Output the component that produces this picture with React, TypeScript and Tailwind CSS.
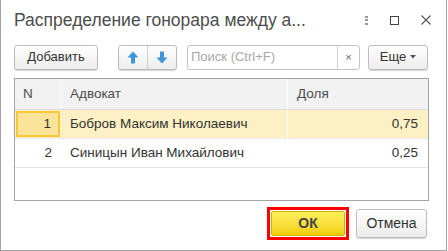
import React from "react";

const font = { fontFamily: '"Liberation Sans", Arial, sans-serif' };

function Btn({ children, className = "" }: { children: React.ReactNode; className?: string }) {
  return (
    <div
      className={
        "flex items-center justify-center rounded-[3px] border border-[#bdbdbd] bg-gradient-to-b from-white to-[#ececec] text-[13px] text-[#333] shadow-[0_1px_1px_rgba(0,0,0,0.18)] " +
        className
      }
    >
      {children}
    </div>
  );
}

function Arrow({ up }: { up?: boolean }) {
  return (
    <svg width="12" height="13" viewBox="0 0 12 13">
      <path
        d={up ? "M6 0.5 L11.5 6.5 L8 6.5 L8 12.5 L4 12.5 L4 6.5 L0.5 6.5 Z" : "M6 12.5 L11.5 6.5 L8 6.5 L8 0.5 L4 0.5 L4 6.5 L0.5 6.5 Z"}
        fill="#3d96dc"
      />
    </svg>
  );
}

export default function App() {
  return (
    <div className="w-[448px] h-[251px] bg-white" style={font}>
      <div className="w-[447px] h-[251px] border-l border-r border-b border-[#a3a3a3] flex flex-col">
        {/* Title */}
        <div className="h-[44px] flex items-start pt-[9px] pl-[13px] pr-[13px]">
          <div className="text-[17.5px] text-[#4d4d4d] leading-[22px] w-[320px] whitespace-nowrap">
            Распределение гонорара между а...
          </div>
          <div className="flex items-center h-[22px] ml-[31px]">
            <div className="flex flex-col gap-[1.5px] w-[3px]">
              <span className="block w-[2.5px] h-[2px] bg-[#9a9a9a]" />
              <span className="block w-[2.5px] h-[2px] bg-[#9a9a9a]" />
              <span className="block w-[2.5px] h-[2px] bg-[#9a9a9a]" />
            </div>
            <div className="ml-[22px] w-[9px] h-[9px] border border-[#444]" />
            <svg className="ml-[22px]" width="10" height="10" viewBox="0 0 10 10">
              <path d="M0.5 0.5 L9.5 9.5 M9.5 0.5 L0.5 9.5" stroke="#555" strokeWidth="1.1" />
            </svg>
          </div>
        </div>
        {/* Toolbar */}
        <div className="h-[26px] flex items-center pl-[13px]">
          <Btn className="w-[84px] h-[25px]">Добавить</Btn>
          <div className="ml-[20px] w-[59px] h-[25px] flex rounded-[3px] border border-[#bdbdbd] bg-gradient-to-b from-white to-[#ececec] shadow-[0_1px_1px_rgba(0,0,0,0.18)]">
            <div className="flex-1 flex items-center justify-center border-r border-[#cfcfcf]">
              <Arrow up />
            </div>
            <div className="flex-1 flex items-center justify-center">
              <Arrow />
            </div>
          </div>
          <div className="ml-[10px] w-[173px] h-[25px] flex rounded-[3px] border border-[#c4c4c4] bg-white">
            <div className="flex-1 flex items-center pl-[3px] text-[13px] text-[#a8a8a8]">Поиск (Ctrl+F)</div>
            <div className="w-[22px] flex items-center justify-center border-l border-[#d0d0d0] text-[11px] text-[#666]">×</div>
          </div>
          <Btn className="ml-[8px] w-[60px] h-[25px]">
            <span>Еще</span>
            <svg className="ml-[4px]" width="6" height="4" viewBox="0 0 6 4">
              <path d="M0 0 L6 0 L3 3.5 Z" fill="#555" />
            </svg>
          </Btn>
        </div>
        {/* Table */}
        <div className="mt-[8px] ml-[13px] w-[415px] h-[123px] border border-[#a3a3a3] flex flex-col text-[13.5px] text-[#333]">
          <div className="h-[31px] flex bg-[#f2f2f2] border-b border-[#dcdcdc] text-[#4d4d4d]">
            <div className="w-[46px] border-r border-white flex items-center pl-[8px]">N</div>
            <div className="w-[227px] border-r border-white flex items-center pl-[9px]">Адвокат</div>
            <div className="flex-1 flex items-center pl-[9px]">Доля</div>
          </div>
          <div className="h-[29px] flex bg-[#fdf0c4] border-b border-[#ececec]">
            <div className="w-[46px] p-[1px]">
              <div className="h-full border-[2px] border-[#f7c73a] bg-[#fbe39a] flex items-center justify-end pr-[7px]">1</div>
            </div>
            <div className="w-[227px] border-r border-white flex items-center pl-[9px]">Бобров Максим Николаевич</div>
            <div className="flex-1 flex items-center justify-end pr-[10px]">0,75</div>
          </div>
          <div className="h-[29px] flex border-b border-[#e6e6e6]">
            <div className="w-[46px] flex items-center justify-end pr-[9px]">2</div>
            <div className="w-[227px] flex items-center pl-[9px]">Синицын Иван Михайлович</div>
            <div className="flex-1 flex items-center justify-end pr-[10px]">0,25</div>
          </div>
        </div>
        {/* Footer */}
        <div className="mt-[6px] flex justify-end items-center pr-[19px] h-[33px]">
          <div className="w-[82px] h-[33px] border-[3px] border-[#f00] p-[1px]">
            <div className="h-full rounded-[2px] bg-gradient-to-b from-[#fff05a] to-[#f0cf00] border border-[#d4b400] flex items-center justify-center text-[14px] font-bold text-[#444]">
              ОК
            </div>
          </div>
          <Btn className="ml-[7px] w-[71px] h-[29px] text-[14px]">Отмена</Btn>
        </div>
      </div>
    </div>
  );
}
